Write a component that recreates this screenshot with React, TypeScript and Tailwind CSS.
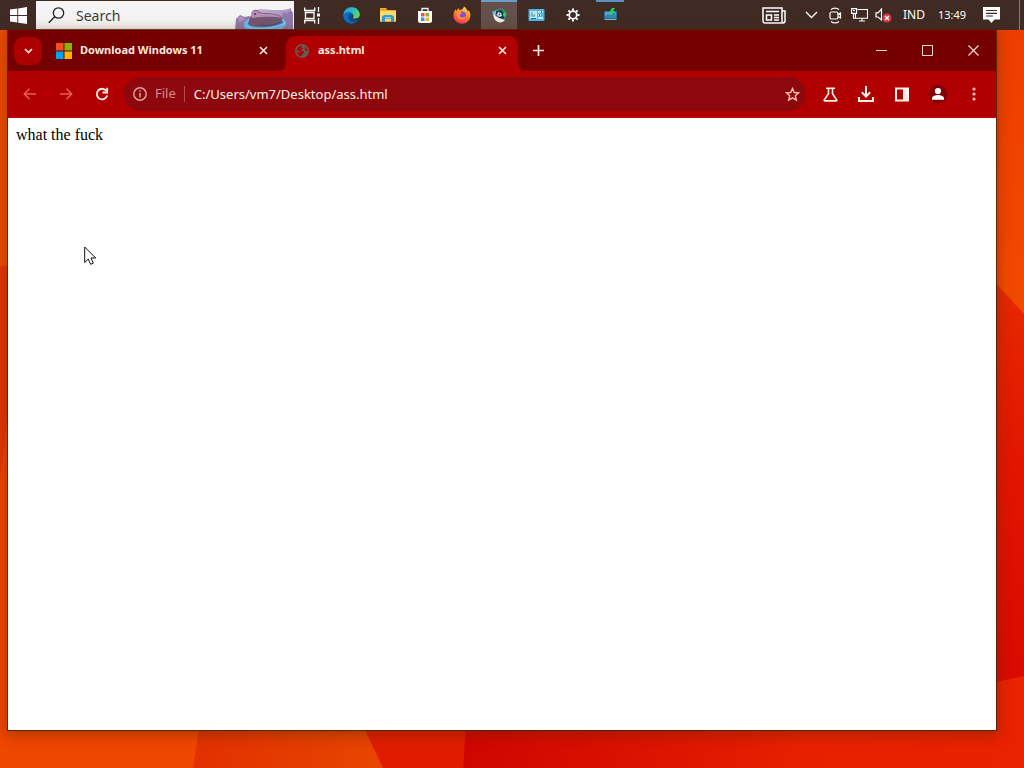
import React from "react";
import type { ReactNode } from "react";

function Wallpaper() {
  return (
    <svg className="absolute inset-0 h-full w-full" viewBox="0 0 1024 768" preserveAspectRatio="none" aria-hidden="true">
      <defs>
        <linearGradient id="wallTop" x1="0" y1="0" x2="0" y2="1">
          <stop offset="0" stopColor="#ee3c00" />
          <stop offset="1" stopColor="#f24a00" />
        </linearGradient>
        <linearGradient id="wallSide" x1="0" y1="0" x2="0" y2="1">
          <stop offset="0" stopColor="#e62a00" />
          <stop offset="0.5" stopColor="#e21400" />
          <stop offset="1" stopColor="#d80900" />
        </linearGradient>
        <linearGradient id="wallRight" x1="0" y1="0" x2="1" y2="0">
          <stop offset="0" stopColor="#cf0500" />
          <stop offset="0.35" stopColor="#dc1400" />
          <stop offset="0.6" stopColor="#e82000" />
          <stop offset="1" stopColor="#e92200" />
        </linearGradient>
        <linearGradient id="wallMid" x1="0" y1="0" x2="1" y2="0">
          <stop offset="0" stopColor="#e23000" />
          <stop offset="1" stopColor="#e74600" />
        </linearGradient>
      </defs>
      <rect width="1024" height="768" fill="#ef4600" />
      <rect width="12" height="266" fill="#ec4a00" />
      <path d="M0 266h12v110L0 480z" fill="#e43400" />
      <rect x="900" width="124" height="330" fill="url(#wallTop)" />
      <path d="M980 266l44 48v380H980z" fill="url(#wallSide)" />
      <path d="M199 728L193 768H384L364 728z" fill="url(#wallMid)" />
      <path d="M364 728L383 768H470L466 728z" fill="#e01c00" />
      <path d="M466 728L463 768H1024V676L980 686V728z" fill="url(#wallRight)" />
    </svg>
  );
}

function StartIcon() {
  return (
    <svg width="17" height="17" viewBox="0 0 17 17" fill="#fff">
      <path d="M0 2.5l7.3-1v6.6H0zM8.2 1.4L17 0v8.1H8.2zM0 9h7.3v6.5L0 14.5zM8.2 9H17v8l-8.8-1.3z" />
    </svg>
  );
}

function SearchArt() {
  return (
    <svg width="60" height="29" viewBox="0 0 60 29">
      <defs>
        <linearGradient id="rock" x1="0" y1="0" x2="1" y2="1">
          <stop stopColor="#c9b3d6" />
          <stop offset="0.6" stopColor="#a893c0" />
          <stop offset="1" stopColor="#8d7db2" />
        </linearGradient>
      </defs>
      <path d="M18 16l1-6 7-2 12 1 11 0 5-1 3-1 1 22H17z" fill="url(#rock)" />
      <path d="M1 29l1-11 4-4 5 2 4-1 4 3-5 11z" fill="#8e7ba8" />
      <path d="M4 16l5-1 2 4-6 2z" fill="#aa94bd" />
      <path d="M47 17l3-6 3 2 4-4 2 3v17H47z" fill="#907aab" />
      <path d="M10 25C9 18 20 15 33 15c13 0 20 4 19 8-1 3-5 6-9 6H15c-3-1-5-2-5-4z" fill="#67bdf1" />
      <path d="M14 22c0-4 9-6 19-6s16 2 16 6-7 5-17 5-18-1-18-5z" fill="#675e94" />
      <path d="M15 22c0-7 4-8 3-11 1-3 6-3 7 0 4 2 20 0 23 6 1 4-6 6-14 7-7 1-15 1-19-2z" fill="#775671" />
      <path d="M17 13c0-4 6-5 8-1l8 1c7 0 12 1 14 4-8-2-20-1-29 0z" fill="#b28fb6" />
      <path d="M22 23c8 2 20 1 25-3-2 5-18 7-25 3z" fill="#3b4f82" />
      <circle cx="21" cy="13" r="1" fill="#4d3555" />
      <path d="M12 25c9 3 29 3 39-3" stroke="#70cff8" strokeWidth="1.500" fill="none" />
    </svg>
  );
}

function TaskViewIcon() {
  return (
    <svg width="17" height="17" viewBox="0 0 17 17" fill="none" stroke="#fff" strokeWidth="1.300">
      <path d="M.7.500v3h10v-3M.7 16.500v-3h10v3M1.500 5v7M10 5v7M.7 5.500h10M.7 11.500h10M14.500 0v5M14.500 11v6" />
      <path d="M13 6.500h3v3h-3z" fill="#fff" stroke="none" />
    </svg>
  );
}

function EdgeIcon() {
  return (
    <svg width="17" height="17" viewBox="0 0 17 17">
      <defs>
        <linearGradient id="edgeWave" x1="0" x2="1" y1="0.200" y2="0.600">
          <stop stopColor="#199ce0" />
          <stop offset="0.600" stopColor="#31c2b0" />
          <stop offset="1" stopColor="#63d957" />
        </linearGradient>
      </defs>
      <circle cx="8.500" cy="8.500" r="8.300" fill="#0c70c5" />
      <path d="M.3 8C1 3 4 .2 8.500.2c5 0 8.200 3.600 8.200 7 0 3-2 4.500-5 4.500-2 0-2.700-.7-1.700-1.800C11 7 8.500 5 6 5 3 5 1 6.500.3 8z" fill="url(#edgeWave)" />
      <path d="M6 7c-2 5 1 9 6 8.500 2-.3 3.400-1.500 4-2.800-3 1.500-7 .3-7.500-2C8.200 9 9.500 8 8.500 7 7.700 6.300 6.500 6.300 6 7z" fill="#124b95" />
      <path d="M8.500 10c-.2-1 1-1.600.3-2.700 1.600.3 2 1.700 1.300 2.600-.8 1-.2 1.700 1 1.800 2.500.2 4.600-.7 5.500-2.500-.1 1.500-.6 2.700-1.200 3.600-2.400 1.100-6.300.1-6.900-2.800z" fill="#3b302b" />
    </svg>
  );
}

function FolderIcon() {
  return (
    <svg width="18" height="16" viewBox="0 0 18 16">
      <path d="M1 1h6l1.500 2H17v12H1z" fill="#e8a928" />
      <path d="M1 4h16v10H1z" fill="#ffda69" />
      <path d="M3 15V9.500L5 8h8l2 1.500V15h-3v-3H6v3z" fill="#3399d8" />
      <path d="M6 10h6v1.500H6z" fill="#9bd5ee" />
    </svg>
  );
}

function StoreIcon() {
  return (
    <svg width="16" height="17" viewBox="0 0 16 17">
      <path d="M5 5V1.500h6V5" fill="none" stroke="#eee" strokeWidth="1.400" />
      <path d="M1 4h14v10.500L13.500 16h-11L1 14.500z" fill="#fff" />
      <path d="M4 6h3.500v3.500H4z" fill="#ef543b" />
      <path d="M8.500 6H12v3.500H8.500z" fill="#7eb733" />
      <path d="M4 10.500h3.500V14H4z" fill="#2a9ddd" />
      <path d="M8.500 10.500H12V14H8.500z" fill="#f5b822" />
    </svg>
  );
}

function FirefoxIcon() {
  return (
    <svg width="18" height="18" viewBox="0 0 18 18">
      <defs>
        <linearGradient id="foxFire" x1="0.800" y1="0" x2="0.300" y2="1">
          <stop stopColor="#ffe34c" />
          <stop offset="0.450" stopColor="#ff8b26" />
          <stop offset="1" stopColor="#f32d68" />
        </linearGradient>
      </defs>
      <path d="M11 .5c3 2 3 4 4 5l.5-1.500c2 2.500 2.300 5 1.500 7.700C15.700 15.600 12.500 17.700 9 17.700 4 17.700.5 14 .5 9.500c0-2.700.7-4.700 2.300-6.500l.5 2L5.500 2l.7 2C9 4 10 3 11 .5z" fill="url(#foxFire)" />
      <circle cx="9" cy="9.500" r="4" fill="#834edf" />
      <path d="M4 6c2-1 4-.2 5 1l-2 1.500c-1 1.500.5 3.500 3 3 1.500-.3 2.300-1 3-2-.2 3-2.400 4.500-4.700 4.300C5 13.600 3 10 4 6z" fill="#ff9828" />
    </svg>
  );
}

function BirdIcon() {
  return (
    <svg width="17" height="17" viewBox="0 0 17 17">
      <path d="M1 5l5-3c5-2 9 1 9.500 5l-1 5c-2 4-7 4-10 1C2 10.500 1 8 1 5z" fill="#52747b" />
      <path d="M2 6l4 4 5 2 3 1c-3 4-9 3-11-2z" fill="#f2eedf" />
      <path d="M1 5l5-2 3 3-3 2-3-1z" fill="#79bad4" />
      <path d="M5 4l5-1 4 3-1 6-5-1-3-4z" fill="#123c4e" />
      <path d="M7 5l3 1 1 3-3 1-2-2z" fill="#d5eeed" />
      <path d="M10 2c3 0 5 3 5.500 5L14 11l-2-2 .5-3z" fill="#249956" />
      <circle cx="8.500" cy="7.500" r="1" fill="#336575" />
      <path d="M13 5l2 2-1 3-2-2z" fill="#34d269" />
    </svg>
  );
}

function PanelIcon() {
  return (
    <svg width="17" height="14" viewBox="0 0 17 14">
      <rect x=".5" y="1" width="16" height="12" rx="1" fill="#50b3e3" />
      <path d="M2 3h7v8H2z" fill="#b9ecfa" />
      <circle cx="5" cy="6.500" r="2.500" fill="#70b6cf" />
      <path d="M5 6.500V4A2.500 2.500 0 017.500 6.500z" fill="#f4e68a" />
      <path d="M10 3h5v2h-5zM10 6h3v2h-3zM10 9h5v2h-5z" fill="#b7edfa" />
      <path d="M13 3h1v2h-1zM11 6h1v2h-1zM3 10h5v1H3z" fill="#286da6" />
    </svg>
  );
}

function GearIcon() {
  return (
    <svg width="14" height="14" viewBox="0 0 14 14" fill="none" stroke="#fff">
      <circle cx="7" cy="7" r="3.800" strokeWidth="1.800" />
      <path d="M7 .5v2M7 11.500v2M.5 7h2M11.500 7h2M2.400 2.400l1.500 1.500M10.100 10.100l1.500 1.500M2.400 11.600l1.500-1.500M10.100 3.900l1.500-1.500" strokeWidth="2" />
    </svg>
  );
}

function MonitorAppIcon() {
  return (
    <svg width="15" height="14" viewBox="0 0 15 14">
      <path d="M1 3h13v9H1z" fill="#31698f" />
      <path d="M2 4h11v6H2z" fill="#55a9d8" />
      <path d="M2 8l3-2 3 1 4-3 1 6H2z" fill="#2c88a8" />
      <path d="M9 0h3l-2 3h2L7 8l1-3H6z" fill="#22d54d" />
      <path d="M2 11h11v1H2z" fill="#80b7ce" />
    </svg>
  );
}

const apps: { name: string; icon: ReactNode; state?: "active" | "running" }[] = [
  { name: "Edge", icon: <EdgeIcon /> },
  { name: "File Explorer", icon: <FolderIcon /> },
  { name: "Store", icon: <StoreIcon /> },
  { name: "Firefox", icon: <FirefoxIcon /> },
  { name: "Browser", icon: <BirdIcon />, state: "active" },
  { name: "Control Panel", icon: <PanelIcon /> },
  { name: "Settings", icon: <GearIcon /> },
  { name: "Remote Desktop", icon: <MonitorAppIcon />, state: "running" },
];

function TrayButton({ label, className, children }: { label: string; className: string; children: ReactNode }) {
  return (
    <button aria-label={label} className={`flex h-full shrink-0 items-center justify-center ${className}`}>
      {children}
    </button>
  );
}

function Taskbar() {
  return (
    <header className="relative flex h-[30px] shrink-0 items-stretch bg-[#402b24] text-white">
      <button aria-label="Start" className="flex w-9 shrink-0 items-center justify-center">
        <StartIcon />
      </button>
      <label className="mt-px flex w-[258px] shrink-0 items-center bg-[#f4f4f4] pl-3">
        <svg className="shrink-0" width="17" height="17" viewBox="0 0 17 17" fill="none" stroke="#222" strokeWidth="1.300">
          <circle cx="10.500" cy="6" r="5.200" />
          <path d="M6.700 9.700L.8 15.800" />
        </svg>
        <input
          aria-label="Search"
          placeholder="Search"
          className="ml-[11px] w-0 min-w-0 flex-1 bg-transparent text-[14px] leading-5 outline-none placeholder:text-[#3b3b3b]"
        />
        <SearchArt />
      </label>
      <TrayButton label="Task view" className="w-9"><TaskViewIcon /></TrayButton>
      <nav aria-label="Applications" className="ml-[3px] flex gap-px">
        {apps.map((app) => (
          <button
            key={app.name}
            aria-label={app.name}
            className={`flex w-9 flex-col items-center ${app.state === "active" ? "bg-[#65504b]" : ""}`}
          >
            <span className={`h-0.5 ${app.state === "active" ? "w-full bg-[#6b9fc9]" : app.state === "running" ? "w-7 bg-[#568fc0]" : "w-full"}`} />
            <span className="flex flex-1 items-center pb-0.5">{app.icon}</span>
          </button>
        ))}
      </nav>
      <div className="ml-auto flex items-center text-[12px]">
        <TrayButton label="News" className="w-[50px]">
          <svg width="24" height="17" viewBox="0 0 24 17" fill="none" stroke="#fff" strokeWidth="1.500">
            <path d="M20 4h3v10q0 2-2 2H3q-2 0-2-2V1h19v13q0 1.500 1.500 1.500M4 4.500h13M12 8h5M12 10.500h5M12 13h5" />
            <path d="M4.500 8h5v5h-5z" />
          </svg>
        </TrayButton>
        <TrayButton label="Show hidden icons" className="w-6">
          <svg width="13" height="8" viewBox="0 0 13 8" fill="none" stroke="#fff" strokeWidth="1.300"><path d="M1 1l5.500 5.500L12 1" /></svg>
        </TrayButton>
        <TrayButton label="Meet now" className="w-6">
          <svg width="14" height="17" viewBox="0 0 14 17" fill="none" stroke="#fff" strokeWidth="1.200">
            <path d="M3 2.700C5 .5 9 .5 11 2.700M3 14.300c2 2.200 6 2.200 8 0M10 7.500L12.500 6v5L10 9.500" />
            <rect x="2" y="5" width="8" height="7" rx="1.500" />
          </svg>
        </TrayButton>
        <TrayButton label="Network" className="w-6">
          <svg width="17" height="14" viewBox="0 0 17 14" fill="none" stroke="#fff" strokeWidth="1.100">
            <path d="M6.500 1.500h10v8.800H4.500V6M8 13h6M11 10.500V13M.6.6h5v4.800h-5zM2 2.500h2M2.500 5.400v4.900h2" />
          </svg>
        </TrayButton>
        <TrayButton label="Sound muted" className="w-6">
          <svg width="17" height="15" viewBox="0 0 17 15" fill="none">
            <path d="M1 4.800h2L6.500 1v11L3 9H1z" stroke="#fff" strokeWidth="1.200" />
            <circle cx="12" cy="10" r="4.500" fill="#db3549" />
            <path d="M10 8l4 4m0-4l-4 4" stroke="#fff" strokeWidth="1.300" />
          </svg>
        </TrayButton>
        <button className="h-full w-[38px]">IND</button>
        <button className="h-full w-[38px] whitespace-nowrap text-[11px] tabular-nums">13:49</button>
        <TrayButton label="Notifications" className="mr-2 w-10">
          <svg width="17" height="16" viewBox="0 0 17 16" fill="#fff">
            <path d="M0 0h17v12.500h-5.500L8.500 16l-3-3.500H0z" />
            <path d="M3 3.500h11M3 6.300h11M3 9h7" stroke="#402b24" strokeWidth="1.200" />
          </svg>
        </TrayButton>
        <button aria-label="Show desktop" className="h-full w-[5px] border-l border-[#8b7c76]" />
      </div>
    </header>
  );
}

function CloseIcon() {
  return (
    <svg width="9" height="9" viewBox="0 0 9 9" fill="none" stroke="currentColor" strokeWidth="1.600"><path d="M1 1l7 7M8 1L1 8" /></svg>
  );
}

function TabStrip() {
  return (
    <div className="flex h-[41px] shrink-0 items-stretch bg-[#740000] text-[#ffe8df]">
      <button aria-label="Search tabs" className="ml-1.5 mt-[7px] flex h-7 w-7 shrink-0 items-center justify-center rounded-[9px] bg-[#ac0003]">
        <svg width="9" height="6" viewBox="0 0 9 6" fill="none" stroke="currentColor" strokeWidth="1.700"><path d="M1 1l3.500 3.500L8 1" /></svg>
      </button>
      <div role="tablist" className="flex text-[11px] font-bold">
        <div className="flex w-[244px] items-center pl-3.5 pr-[15px]">
          <svg className="shrink-0" width="16" height="16" viewBox="0 0 16 16">
            <path d="M0 0h7.500v7.500H0z" fill="#f25022" /><path d="M8.500 0H16v7.500H8.500z" fill="#7fba00" />
            <path d="M0 8.500h7.500V16H0z" fill="#00a4ef" /><path d="M8.500 8.500H16V16H8.500z" fill="#ffb900" />
          </svg>
          <button role="tab" aria-selected="false" className="ml-2 flex-1 whitespace-nowrap text-left">Download Windows 11</button>
          <button aria-label="Close Download Windows 11" className="flex h-4 w-4 items-center justify-center"><CloseIcon /></button>
        </div>
        <div className="relative mt-1.5 flex w-[232px] items-center rounded-t-[9px] bg-[#b00002] pb-1.5 pl-2 pr-2">
          <svg className="absolute -left-2 bottom-0" width="8" height="8" viewBox="0 0 8 8" fill="#b00002"><path d="M8 0v8H0a8 8 0 008-8z" /></svg>
          <svg className="absolute -right-2 bottom-0" width="8" height="8" viewBox="0 0 8 8" fill="#b00002"><path d="M0 0v8h8a8 8 0 01-8-8z" /></svg>
          <svg className="shrink-0" width="16" height="16" viewBox="0 0 16 16">
            <circle cx="8" cy="8" r="7" fill="#6b5953" />
            <path d="M2.500 7.500C2.800 4.500 5 2.700 8.500 2.800L7.200 4.600 9 5.500 7 7.300l2.500.7 1 2.200-2 .8-.8 2.300C5 13.500 3 11.500 2.500 9l3 .5L5.300 8z" fill="#a30d0d" />
            <path d="M10.500 3.300c2 1 3 2.800 2.900 5.200L11.700 7.400l-1.500-.6 1-1.600z" fill="#a30d0d" />
          </svg>
          <button role="tab" aria-selected="true" className="ml-2 flex-1 whitespace-nowrap text-left">ass.html</button>
          <button aria-label="Close ass.html" className="flex h-4 w-4 items-center justify-center"><CloseIcon /></button>
        </div>
      </div>
      <button aria-label="New tab" className="flex w-10 items-center justify-center">
        <svg width="11" height="11" viewBox="0 0 11 11" stroke="currentColor" strokeWidth="1.700"><path d="M5.500 0v11M0 5.500h11" /></svg>
      </button>
      <div className="ml-auto flex text-[#ffd9cf]">
        <button aria-label="Minimize" className="flex w-[46px] items-center justify-center">
          <svg width="11" height="11" viewBox="0 0 11 11" stroke="currentColor"><path d="M0 5.500h11" /></svg>
        </button>
        <button aria-label="Maximize" className="flex w-[46px] items-center justify-center">
          <svg width="11" height="11" viewBox="0 0 11 11" fill="none" stroke="currentColor"><path d="M.5.5h10v10H.5z" /></svg>
        </button>
        <button aria-label="Close window" className="flex w-[46px] items-center justify-center">
          <svg width="11" height="11" viewBox="0 0 11 11" stroke="currentColor" strokeWidth="1.200"><path d="M.5.5l10 10M10.500.5l-10 10" /></svg>
        </button>
      </div>
    </div>
  );
}

function ToolButton({ label, className = "", children }: { label: string; className?: string; children: ReactNode }) {
  return <button aria-label={label} className={`flex h-9 w-9 shrink-0 items-center justify-center ${className}`}>{children}</button>;
}

function Toolbar() {
  return (
    <div className="flex h-[47px] shrink-0 items-center border-b border-[#c80a08] bg-[#b00002] px-1 text-[#fff0e8]">
      <ToolButton label="Back" className="text-[#e75b58]">
        <svg width="14" height="12" viewBox="0 0 14 12" fill="none" stroke="currentColor" strokeWidth="1.500"><path d="M6.500.8L1.300 6l5.200 5.200M1.500 6H13" /></svg>
      </ToolButton>
      <ToolButton label="Forward" className="text-[#e75b58]">
        <svg width="14" height="12" viewBox="0 0 14 12" fill="none" stroke="currentColor" strokeWidth="1.500"><path d="M7.500.8L12.700 6l-5.200 5.200M12.500 6H1" /></svg>
      </ToolButton>
      <ToolButton label="Reload">
        <svg width="14" height="14" viewBox="0 0 14 14" fill="none" stroke="currentColor" strokeWidth="1.800">
          <path d="M11.300 3.800A5.300 5.300 0 1012.200 8.500" /><path d="M12.200.8v4.700H7.500" />
        </svg>
      </ToolButton>
      <div className="ml-1 flex h-[34px] min-w-0 flex-1 items-center rounded-full bg-[#8d080c] pl-[9px] pr-1.5 text-[13px]">
        <svg className="shrink-0 text-[#d7a39b]" width="14" height="14" viewBox="0 0 14 14" fill="none" stroke="currentColor" strokeWidth="1.500">
          <circle cx="7" cy="7" r="6.200" /><path d="M7 6v4.500M7 3.300v1.500" />
        </svg>
        <span className="ml-2 text-[#d78b86]">File</span>
        <span className="ml-2 h-4 w-px bg-[#b94b48]" />
        <input aria-label="Address" defaultValue="C:/Users/vm7/Desktop/ass.html" className="ml-[9px] min-w-0 flex-1 bg-transparent leading-5 outline-none" />
        <button aria-label="Bookmark this page" className="text-[#f0c0ae]">
          <svg width="15" height="15" viewBox="0 0 15 15" fill="none" stroke="currentColor" strokeWidth="1.400">
            <path d="M7.500 1.500l1.800 4 4.300.4-3.300 2.900 1 4.300-3.800-2.300-3.800 2.300 1-4.300L1.400 5.900l4.300-.4z" />
          </svg>
        </button>
      </div>
      <div className="ml-1.5 flex">
        <ToolButton label="Experiments">
          <svg width="15" height="15" viewBox="0 0 15 15" fill="none" stroke="currentColor" strokeWidth="1.600"><path d="M3 1.300h9M5.500 1.500v5.200L1.200 13q-.3.900.8.900h11q1.100 0 .8-.9L9.500 6.700V1.500" /></svg>
        </ToolButton>
        <ToolButton label="Downloads">
          <svg width="16" height="16" viewBox="0 0 16 16" fill="none" stroke="currentColor" strokeWidth="2"><path d="M8 0v10M3.800 6.300L8 10.500l4.200-4.200M1 11v4h14v-4" /></svg>
        </ToolButton>
        <ToolButton label="Side panel">
          <svg width="16" height="15" viewBox="0 0 16 15"><path d="M2 1.500h12v12H2z" fill="none" stroke="currentColor" strokeWidth="2" /><path d="M9 1h6v13H9z" fill="currentColor" /></svg>
        </ToolButton>
        <ToolButton label="Profile">
          <svg width="20" height="20" viewBox="0 0 20 20"><circle cx="10" cy="10" r="9.500" fill="#850006" /><g fill="#fff"><circle cx="10" cy="7" r="3.100" /><path d="M4 15.800v-1.500c0-2 3.500-3.300 6-3.300s6 1.300 6 3.300v1.500z" /></g></svg>
        </ToolButton>
        <ToolButton label="Menu">
          <svg width="4" height="14" viewBox="0 0 4 14" fill="#ffc2b2"><circle cx="2" cy="2" r="1.600" /><circle cx="2" cy="7" r="1.600" /><circle cx="2" cy="12" r="1.600" /></svg>
        </ToolButton>
      </div>
    </div>
  );
}

export default function App() {
  return (
    <div className="relative flex min-h-screen flex-col overflow-hidden font-['Noto_Sans',sans-serif]">
      <Wallpaper />
      <Taskbar />
      <main className="relative mb-[38px] ml-2 mr-7 flex flex-1 flex-col shadow-[0_0_0_1px_rgba(80,32,12,0.85),0_3px_12px_2px_rgba(90,45,0,0.45)]">
        <TabStrip />
        <Toolbar />
        <section className="flex-1 bg-white p-2 font-['Liberation_Serif',serif] text-[16px] leading-[18px] text-black">
          <p>what the fuck</p>
        </section>
      </main>
      <svg className="absolute left-[84px] top-[246px]" width="13" height="20" viewBox="0 0 13 20" fill="#fff" stroke="#111" aria-hidden="true">
        <path d="M.7 1v15.500l3.600-3.400 2.300 5.200 2.700-1.200L7 12h4.700z" />
      </svg>
    </div>
  );
}
